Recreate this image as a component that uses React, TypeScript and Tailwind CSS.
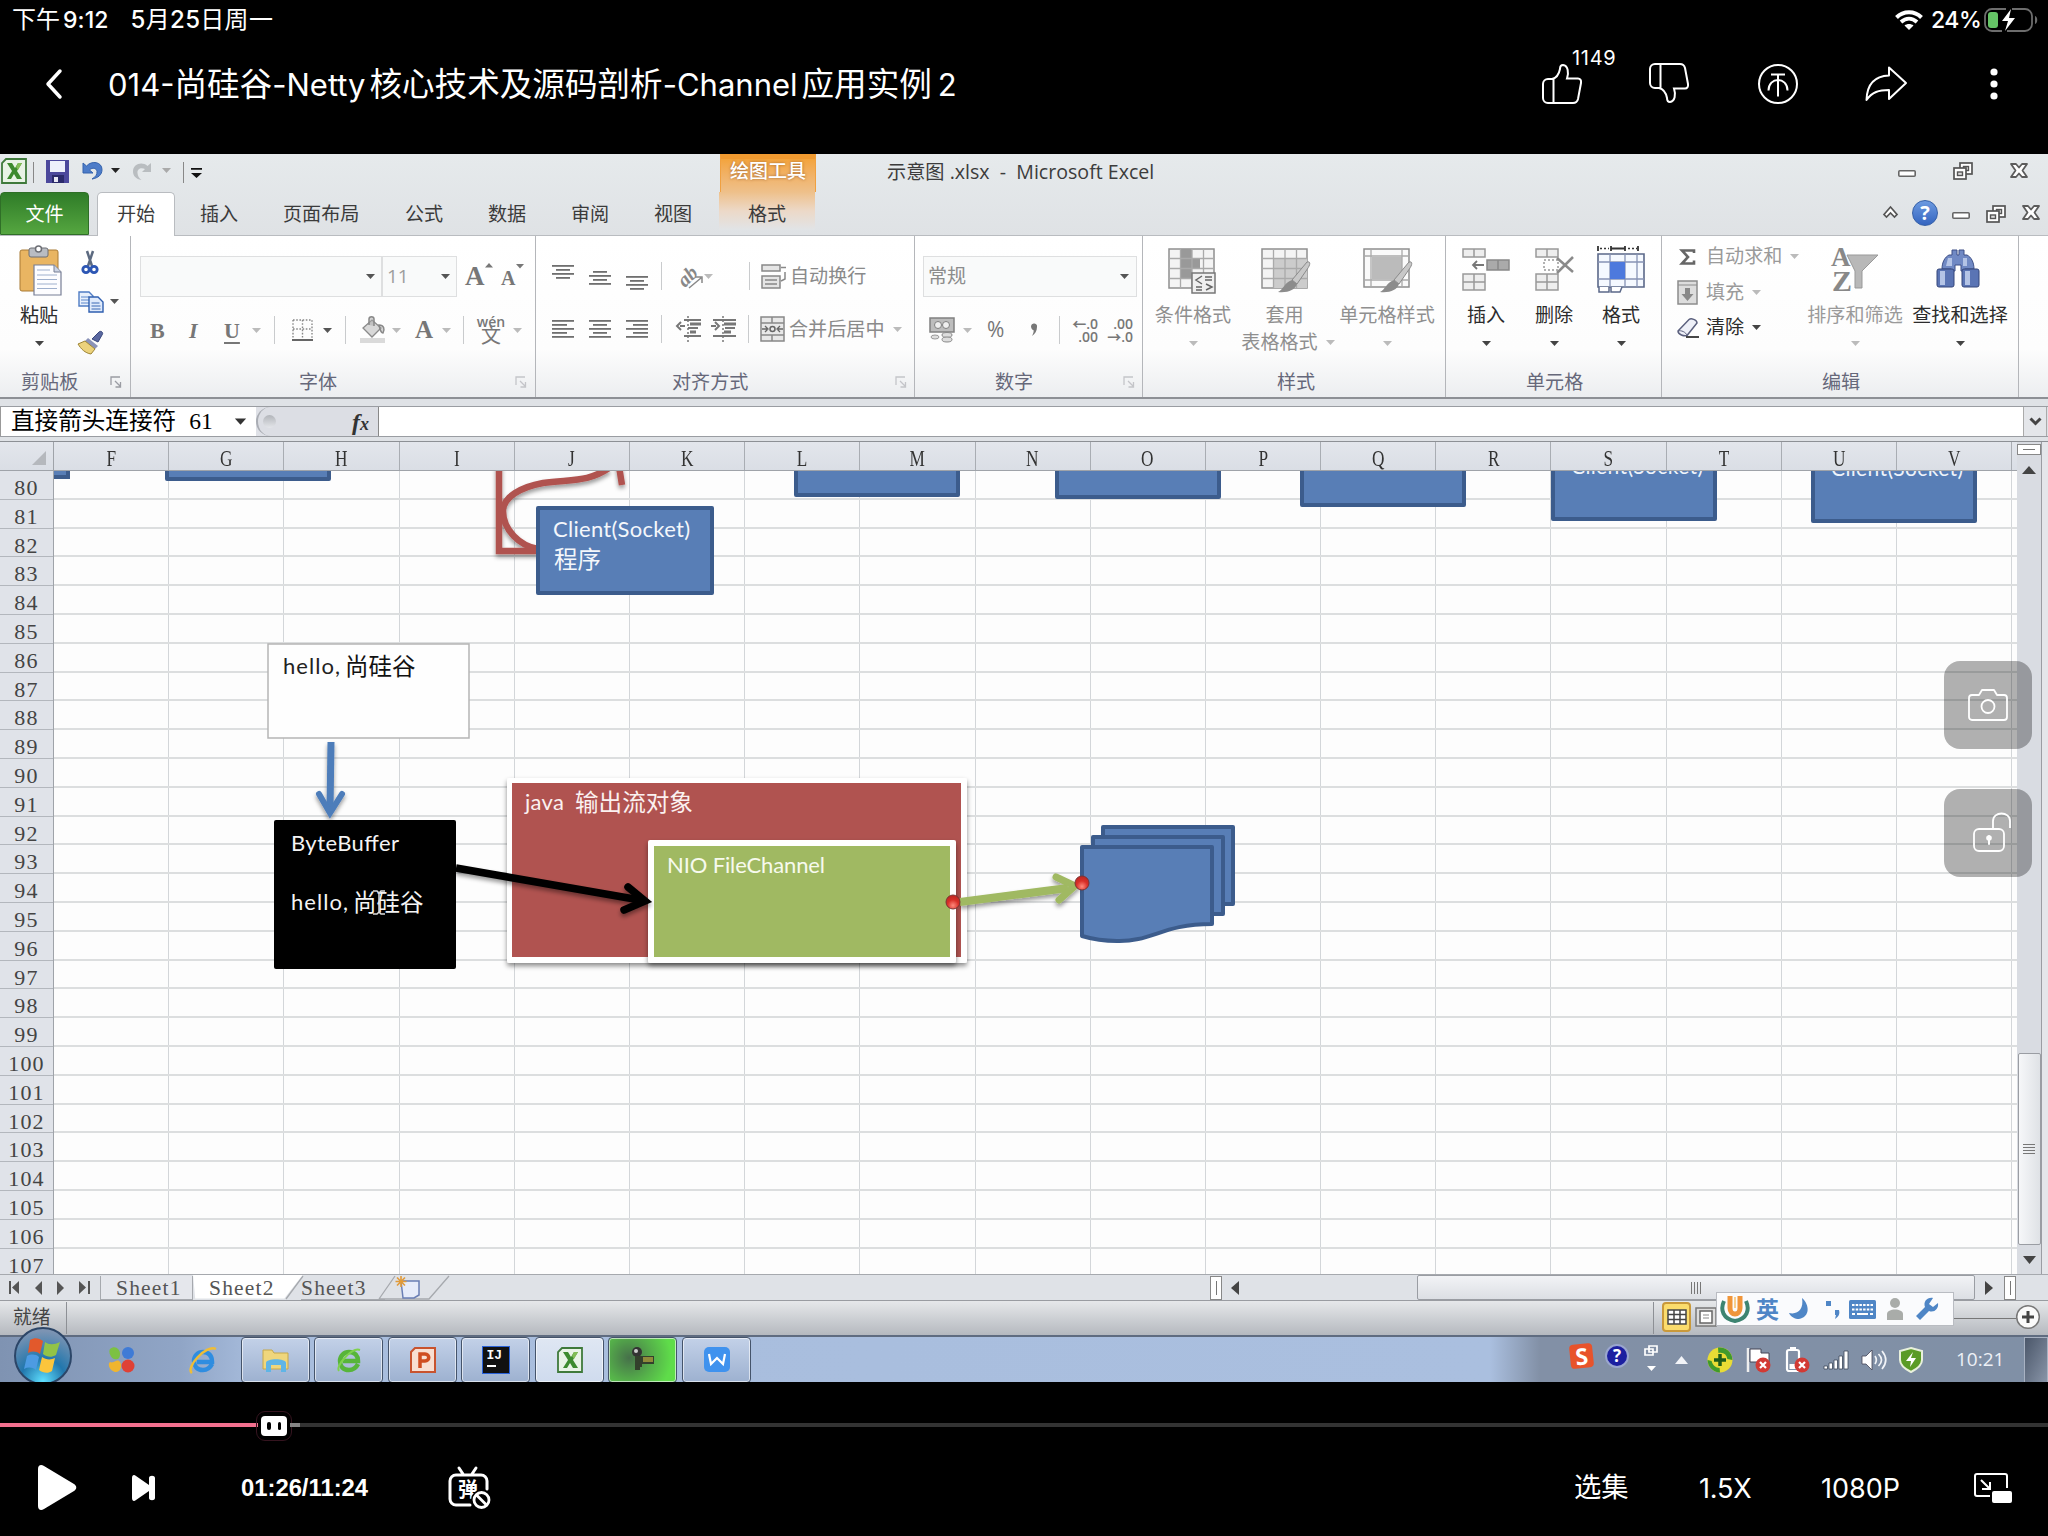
import React from 'react';

type Box = { w: number; h: number; className?: string; children?: React.ReactNode };

function Ic({ w, h, className = '', children }: Box) {
  return (
    <svg width={w} height={h} viewBox={`0 0 ${w} ${h}`} className={`shrink-0 overflow-visible ${className}`} fill="none">
      {children}
    </svg>
  );
}

function Arrow({ className = '', color = '#555' }: { className?: string; color?: string }) {
  return (
    <Ic w={9} h={5} className={className}>
      <path d="M0 0h9L4.500 5z" fill={color} />
    </Ic>
  );
}

function Sep({ className = '' }: { className?: string }) {
  return <div className={`h-7 w-px shrink-0 bg-[#c9cbcd] ${className}`} />;
}

function Launcher({ className = '', color = '#9a9ca3' }: { className?: string; color?: string }) {
  return (
    <Ic w={12} h={12} className={className}>
      <path d="M1 9V1h9M5 5l5 5M10.500 6v5H5.500" stroke={color} strokeWidth="1.300" />
    </Ic>
  );
}

function Group({ className, label, labelClass, launcher, children }: { className: string; label: string; labelClass: string; launcher?: React.ReactNode; children: React.ReactNode }) {
  return (
    <div className={`flex shrink-0 flex-col border-r border-[#b4b6ba] ${className}`}>
      <div className="h-[132px]">{children}</div>
      <div className="flex h-[28px] items-center">
        <span className={`shrink-0 whitespace-nowrap text-[#66687a] ${labelClass}`}>{label}</span>
        {launcher}
      </div>
    </div>
  );
}

function Lines({ rows, className = '' }: { rows: [number, number][]; className?: string }) {
  return (
    <Ic w={22} h={rows.length * 4 - 1} className={className}>
      {rows.map(([x, w], i) => (
        <rect key={i} x={x} y={i * 4} width={w} height={1.8} fill="#6f6f6f" />
      ))}
    </Ic>
  );
}

function MinIcon() {
  return <Ic w={18} h={7}><rect x=".8" y=".8" width="16.400" height="5.400" rx="1" fill="#fff" stroke="#666" strokeWidth="1.600" /></Ic>;
}
function RestoreIcon() {
  return (
    <Ic w={20} h={18}>
      <rect x="7" y="1" width="12" height="11" fill="#fff" stroke="#555" strokeWidth="1.700" />
      <rect x="10.500" y="4.500" width="5" height="4" fill="#ddd" stroke="#555" strokeWidth="1.400" />
      <rect x="1" y="6" width="12" height="11" fill="#fff" stroke="#555" strokeWidth="1.700" />
      <rect x="4.500" y="10" width="5" height="3.500" fill="#ddd" stroke="#555" strokeWidth="1.400" />
    </Ic>
  );
}
function CloseIcon() {
  return (
    <Ic w={18} h={15}>
      <path d="M1 1h5l3 3.500L12 1h5l-4.500 6.500 4.500 6.500h-5l-3-3.500L6 14H1l4.500-6.500z" fill="#fff" stroke="#5c5c5c" strokeWidth="1.800" strokeLinejoin="round" />
    </Ic>
  );
}

function ExcelIcon() {
  return (
    <Ic w={26} h={26}>
      <path d="M5 1h20v24H1V5z" fill="#e9f3e6" stroke="#3f7a3b" strokeWidth="1.800" />
      <path d="M6 5h5l3 5 3-5h4l-5 8 5 8h-5l-3-5-3 5H6l5-8z" fill="#3d8a2e" />
      <path d="M17 5h4l-4 7-2-3z" fill="#82bd55" />
    </Ic>
  );
}

function TitleBar() {
  return (
    <div className="flex h-[38px] items-start">
      <div className="ml-px mt-[4px]"><ExcelIcon /></div>
      <div className="ml-[6px] mt-[8px] h-[21px] w-px bg-[#888]" />
      <Ic w={23} h={23} className="ml-[12px] mt-[6px]">
        <path d="M0 0h23v23H0z" fill="#4c489c" />
        <path d="M4 1h15v11H4z" fill="#eef0fb" />
        <path d="M6 15h12v8H6z" fill="#2b2a6b" />
        <path d="M8 17h4v5H8z" fill="#e8e8f4" />
      </Ic>
      <Ic w={22} h={20} className="ml-[13px] mt-[7px]">
        <path d="M1 2v10h10L7.500 9c3-3 7-2 7.500 1.500.3 3-1.500 5.500-5 7.500 6-1 10-4 10-9.500C20 1 10-1 4.500 5z" fill="#4d7cc9" stroke="#3563ad" />
      </Ic>
      <Arrow className="ml-[7px] mt-[14px]" color="#222" />
      <Ic w={20} h={20} className="ml-[12px] mt-[8px]">
        <path d="M19 1v9h-9l3-3c-4-2-8 0-7.500 4 .2 3 1.500 5 4 7C4 17 1 14 1 9.500 1 2 10-1 15.500 4z" fill="#b9bdc0" />
      </Ic>
      <Arrow className="ml-[10px] mt-[14px]" color="#aaa" />
      <div className="ml-[12px] mt-[8px] h-[21px] w-px bg-[#888]" />
      <Ic w={11} h={11} className="ml-[7px] mt-[14px]"><path d="M0 0h11v1.800H0zM0 5h11l-5.500 5z" fill="#111" /></Ic>
      <div className="ml-[518px] h-[38px] w-[96px] border-x border-[#f0a040] bg-gradient-to-b from-[#f3a43c] to-[#eec08a] text-center text-[19px] font-medium leading-[25px] text-white [border-top:5px_solid_#f09a30] [text-shadow:0_0_3px_#a0622a]">
        绘图工具
      </div>
      <div className="ml-[71px] mt-[3px] w-[300px] whitespace-pre text-[19.2px] leading-[30px] text-[#3c3c3c]">示意图<span className="text-[19.600px]"> .xlsx{'  -  '}Microsoft Excel</span></div>
      <div className="ml-[711px] mt-[16px]"><MinIcon /></div>
      <div className="ml-[37px] mt-[8px]"><RestoreIcon /></div>
      <div className="ml-[37px] mt-[9px]"><CloseIcon /></div>
    </div>
  );
}

function TabRow() {
  const tab = 'shrink-0 whitespace-nowrap leading-[45px]';
  return (
    <div className="flex h-[44px] border-b border-[#b9bcc0] text-[19.100px] text-[#3b3b3b]">
      <div className="h-[43px] w-[89px] shrink-0 rounded-t-[4px] border border-[#2f6f27] bg-gradient-to-b from-[#2f7c28] to-[#55a640] text-center leading-[43px] text-white">文件</div>
      <div className="ml-[8px] h-[44px] w-[78px] shrink-0 rounded-t-[5px] border border-b-0 border-[#b9bcc0] bg-white text-center leading-[43px]">开始</div>
      <div className={`ml-[25px] w-[83px] ${tab}`}>插入</div>
      <div className={`w-[122px] ${tab}`}>页面布局</div>
      <div className={`w-[83px] ${tab}`}>公式</div>
      <div className={`w-[83px] ${tab}`}>数据</div>
      <div className={`w-[83px] ${tab}`}>审阅</div>
      <div className={`w-[65px] ${tab}`}>视图</div>
      <div className={`h-[38px] w-[96px] bg-gradient-to-b from-[#eec08a] via-[#ecd9c8] to-[#e1e4e7] text-center ${tab}`}>格式</div>
      <div className="ml-auto flex w-[168px] shrink-0 items-start">
        <Ic w={15} h={12} className="ml-[3px] mt-[14px]">
          <path d="M1 8.500L7.500 1 14 8.500 11.500 11 7.500 7 3.500 11z" fill="#fff" stroke="#555" strokeWidth="1.700" />
        </Ic>
        <div className="ml-[14px] mt-[8px] h-[26px] w-[26px] shrink-0 rounded-full border border-[#3560a8] bg-gradient-to-b from-[#6d9ae0] to-[#3565c0] text-center text-[20px] font-bold leading-[24px] text-white">?</div>
        <div className="ml-[14px] mt-[20px]"><MinIcon /></div>
        <div className="ml-[16px] mt-[13px]"><RestoreIcon /></div>
        <div className="ml-[16px] mt-[13px]"><CloseIcon /></div>
      </div>
    </div>
  );
}

function BigButton({ className, icon, label, labelClass = 'text-[#2c2c2c]', arrow = '#444', second }: { className: string; icon: React.ReactNode; label: string; labelClass?: string; arrow?: string; second?: string }) {
  return (
    <div className={`flex shrink-0 flex-col items-center whitespace-nowrap pt-[10px] ${className}`}>
      <div className="flex h-[56px] items-start justify-center">{icon}</div>
      <div className={`h-[27px] leading-[27px] ${labelClass}`}>{label}</div>
      {second ? (
        <div className={`-ml-[10px] flex h-[27px] items-center leading-[27px] ${labelClass}`}>{second}<Arrow className="-mr-[17px] ml-[8px]" color={arrow} /></div>
      ) : (
        <Arrow className="mt-[12px]" color={arrow} />
      )}
    </div>
  );
}

function Brush() {
  return (
    <>
      <path d="M46 14c4-1 3 3 1 6L36 36l-5-4z" fill="#c8c8c8" stroke="#8a8a8a" />
      <path d="M31 32l5 4c-2 6-9 9-19 8 5-2 6-9 14-12z" fill="#8c8c8c" />
    </>
  );
}

function StyleGrid({ fill }: { fill?: React.ReactNode }) {
  return (
    <>
      <path d="M1 1h45v39H1z" fill="#f4f4f4" stroke="#8f8f8f" strokeWidth="1.500" />
      {fill}
      <path d="M1 10.500h45M1 20.500h45M1 30.500h45M12.500 1v39M24 1v39M35.500 1v39" stroke="#aaa" strokeWidth="1.300" />
    </>
  );
}

function SmallCommand({ icon, label, muted = false }: { icon: React.ReactNode; label: string; muted?: boolean }) {
  return (
    <div className="flex h-[35.500px] items-center">
      <div className="flex w-[29px] shrink-0 items-center">{icon}</div>
      <span className={muted ? 'text-[#9a9a9a]' : 'text-[#2c2c2c]'}>{label}</span>
      <Arrow className="ml-[8px]" color={muted ? '#bbb' : '#444'} />
    </div>
  );
}

function Ribbon() {
  return (
    <div className="flex h-[163px] border-b-2 border-[#8d9095] bg-gradient-to-b from-white via-[#fdfdfd] via-70% to-[#eceef0] text-[19.100px]">
      <Group className="w-[131px]" label="剪贴板" labelClass="ml-[21px] w-[89px]" launcher={<Launcher />}>
        <div className="flex">
          <BigButton
            className="ml-[10px] w-[58px]"
            label="粘贴"
            icon={
              <Ic w={44} h={50} className="ml-[3px]">
                <rect x="1" y="4" width="38" height="41" rx="2" fill="#e9b562" stroke="#a97b35" />
                <rect x="10" y="2" width="19" height="9" rx="2" fill="#b9bcc2" stroke="#6d6f75" />
                <circle cx="19.500" cy="3" r="3" fill="#fff" stroke="#6d6f75" strokeWidth="1.500" />
                <path d="M15 19h20l7 7v23H15z" fill="#fdfdff" stroke="#777e95" strokeWidth="1.200" />
                <path d="M35 19v7h7" fill="#ccd4e4" stroke="#777e95" />
                <path d="M18 24h13M18 29h20M18 33.500h20M18 38h20M18 42.500h20" stroke="#9fb0cd" />
              </Ic>
            }
          />
          <div className="ml-[9px] flex flex-col pt-[15px]">
            <Ic w={26} h={24}>
              <path d="M10 0l5 15M16 0l-5 15" stroke="#5c6a80" strokeWidth="2.500" />
              <circle cx="9" cy="18.500" r="3.200" stroke="#2c56b4" strokeWidth="2.800" />
              <circle cx="17" cy="18.500" r="3.200" stroke="#2c56b4" strokeWidth="2.800" />
            </Ic>
            <div className="mt-[16px] flex items-center">
              <Ic w={26} h={21} className="ml-px">
                <path d="M1 1h10l4 4v10H1z" fill="#e8f0fc" stroke="#4f7cc4" strokeWidth="1.400" />
                <path d="M3 6h8M3 9h8M3 12h8" stroke="#5b86ca" />
                <path d="M11 6h9l5 5v10H11z" fill="#dfeafb" stroke="#2f5fb0" strokeWidth="1.400" />
                <path d="M13.500 12h8M13.500 15h9M13.500 18h9" stroke="#3b69b4" />
              </Ic>
              <Arrow className="ml-[6px]" />
            </div>
            <Ic w={27} h={23} className="mt-[19px]">
              <path d="M15 8l7-7c2-2 5 1 3 3l-4 7z" fill="#5a68a0" stroke="#39477c" />
              <path d="M11 7l10 8-3 3L8 10z" fill="#8b93b8" />
              <path d="M8 10l10 8-4 5C8 22 4 18 1 13z" fill="#ecd27c" stroke="#9d8434" />
            </Ic>
          </div>
        </div>
      </Group>

      <Group className="w-[405px]" label="字体" labelClass="ml-[168px] w-[216px]" launcher={<Launcher color="#c4c5c9" />}>
        <div className="flex h-[40px] translate-y-[20px] items-center">
          <div className="ml-[9px] flex h-[41px] w-[242px] items-center justify-end border border-[#dedfe0] bg-[#f9fafa] pr-[6px]"><Arrow /></div>
          <div className="flex h-[41px] w-[75px] items-center border border-[#dedfe0] bg-[#f9fafa] pl-[4px]"><span className="w-[54px] text-[19px] text-[#9d9d9d]">11</span><Arrow /></div>
          <span className="ml-[8px] w-[20px] font-['Liberation_Serif'] text-[27px] font-bold leading-[36px] text-[#777]">A</span>
          <Ic w={8} h={5} className="-mt-[22px]"><path d="M4 0l4 4.500H0z" fill="#777" /></Ic>
          <span className="ml-[8px] w-[15px] pt-[4px] font-['Liberation_Serif'] text-[20px] font-bold leading-[36px] text-[#777]">A</span>
          <Ic w={8} h={5} className="-mt-[20px]"><path d="M0 0h8L4 4.500z" fill="#777" /></Ic>
        </div>
        <div className="flex h-[40px] translate-y-[34px] items-center font-['Liberation_Serif'] text-[22px] text-[#777]">
          <b className="ml-[19px] w-[37px]">B</b>
          <b className="w-[37px] pl-[2px] italic">I</b>
          <b className="w-[28px] underline underline-offset-4">U</b>
          <Arrow color="#bbb" />
          <Sep className="ml-[13px]" />
          <Ic w={21} h={22} className="ml-[17px]">
            <path d="M1 1h19v18M1 1v18M10.500 1v18M1 10h19" stroke="#888" strokeWidth="1.400" strokeDasharray="1.600 1.600" />
            <path d="M0 21h21" stroke="#555" strokeWidth="1.800" />
          </Ic>
          <Arrow className="ml-[10px]" />
          <Sep className="ml-[13px]" />
          <Ic w={26} h={26} className="ml-[14px]">
            <path d="M0 21h25v5H0z" fill="#dadada" />
            <path d="M3 11l9-8 9 8-9 9z" fill="#d8d8d8" stroke="#8a8a8a" strokeWidth="1.300" />
            <path d="M9 8V2c0-3 5-3 5 0v7M19 8c5 0 6 4 4 8-2 0-3-3-4-8z" stroke="#888" strokeWidth="1.500" fill="#aaa" fillOpacity=".5" />
          </Ic>
          <Arrow className="ml-[6px]" color="#bbb" />
          <b className="ml-[14px] w-[17px] text-[25px]">A</b>
          <Arrow className="ml-[10px]" color="#bbb" />
          <Sep className="ml-[12px]" />
          <div className="ml-[13px] flex w-[28px] flex-col items-center font-['Open_Sans','Noto_Sans_CJK_SC',sans-serif] leading-none"><span className="text-[14px] font-semibold leading-[10px]">wén</span><span className="text-[20px] leading-[17px]">文</span></div>
          <Arrow className="ml-[8px]" color="#bbb" />
        </div>
      </Group>

      <Group className="w-[379px]" label="对齐方式" labelClass="ml-[136px] w-[223px]" launcher={<Launcher color="#c4c5c9" />}>
        <div className="flex h-[40px] translate-y-[20px] items-center">
          <Lines className="-mt-[8px] ml-[16px]" rows={[[0, 22], [4, 14], [0, 22], [4, 14]]} />
          <Lines className="ml-[15px] mt-[5px]" rows={[[4, 14], [0, 22], [4, 14], [0, 22]]} />
          <Lines className="ml-[15px] mt-[14px]" rows={[[0, 22], [4, 14], [0, 22], [4, 14]]} />
          <Sep className="ml-[13px]" />
          <div className="ml-[15px] flex w-[26px] items-center">
            <span className="-rotate-45 font-['Liberation_Serif'] text-[20px] font-bold italic leading-none text-[#888]">ab</span>
            <Ic w={14} h={14} className="-ml-[8px] mt-[10px]"><path d="M0 14L12 4M6 3l7 0v6" stroke="#888" strokeWidth="1.500" /></Ic>
          </div>
          <Arrow className="ml-px" color="#bbb" />
          <Sep className="ml-[36px]" />
          <Ic w={25} h={26} className="ml-[11px]">
            <path d="M1 2h18v6H1zM1 13h18v12H1z" fill="#e5e5e5" stroke="#888" strokeWidth="1.500" />
            <path d="M4 17h12M4 21h12M20 4.500h5M24 9v7l-4 2" stroke="#888" strokeWidth="1.500" />
          </Ic>
          <span className="ml-[4px] text-[#8a8a8a]">自动换行</span>
        </div>
        <div className="flex h-[40px] translate-y-[33px] items-center">
          <Lines className="ml-[16px]" rows={[[0, 22], [0, 15], [0, 22], [0, 15], [0, 22]]} />
          <Lines className="ml-[15px]" rows={[[0, 22], [4, 14], [0, 22], [4, 14], [0, 22]]} />
          <Lines className="ml-[15px]" rows={[[0, 22], [7, 15], [0, 22], [7, 15], [0, 22]]} />
          <Sep className="ml-[13px]" />
          <Ic w={25} h={26} className="ml-[14px]">
            <path d="M8 4h17M12 12h10M8 20h17" stroke="#777" strokeWidth="2" />
            <path d="M14 8h11M14 16h6" stroke="#777" strokeWidth="3" />
            <path d="M12 0v26" stroke="#777" strokeWidth="1.500" strokeDasharray="2 2" />
            <path d="M9 10H4M5 6l-4 4 4 4" stroke="#777" strokeWidth="2" />
          </Ic>
          <Ic w={25} h={26} className="ml-[10px]">
            <path d="M2 4h23M14 12h10M2 20h23" stroke="#777" strokeWidth="2" />
            <path d="M13 8h12M13 16h7" stroke="#777" strokeWidth="3" />
            <path d="M12 0v26" stroke="#777" strokeWidth="1.500" strokeDasharray="2 2" />
            <path d="M0 10h5M4 6l4 4-4 4" stroke="#777" strokeWidth="2" />
          </Ic>
          <Sep className="ml-[12px]" />
          <Ic w={25} h={26} className="ml-[11px]">
            <path d="M1 1h23v24H1zM1 7h23M1 19h23M12 1v6M12 19v6" fill="#e8e8e8" stroke="#888" strokeWidth="1.500" />
            <path d="M2 13h5M23 13h-5M5 10l3 3-3 3M20 10l-3 3 3 3" stroke="#666" strokeWidth="1.300" />
            <circle cx="12.500" cy="13" r="2.500" stroke="#666" strokeWidth="1.500" />
          </Ic>
          <span className="ml-[4px] text-[#8a8a8a]">合并后居中</span>
          <Arrow className="ml-[9px]" color="#bbb" />
        </div>
      </Group>

      <Group className="w-[228px]" label="数字" labelClass="ml-[80px] w-[128px]" launcher={<Launcher color="#c4c5c9" />}>
        <div className="flex h-[40px] translate-y-[20px] items-center">
          <div className="ml-[8px] flex h-[41px] w-[214px] items-center border border-[#dedfe0] bg-[#f9fafa] pl-[4px] text-[#8c8c8c]"><span className="w-[192px]">常规</span><Arrow /></div>
        </div>
        <div className="flex h-[40px] translate-y-[34px] items-center text-[#777]">
          <Ic w={26} h={26} className="ml-[14px]">
            <rect x="1" y="1" width="24" height="14" fill="#bdbdbd" stroke="#808080" strokeWidth="1.500" />
            <circle cx="9" cy="8" r="3.500" fill="#efefef" stroke="#808080" />
            <circle cx="17" cy="8" r="3.500" fill="#efefef" stroke="#808080" />
            <ellipse cx="18" cy="18" rx="5" ry="2.500" fill="#ddd" stroke="#888" />
            <ellipse cx="18" cy="22.500" rx="5" ry="2.500" fill="#ddd" stroke="#888" />
            <ellipse cx="6" cy="20" rx="4" ry="2" fill="#ddd" stroke="#999" />
          </Ic>
          <Arrow className="ml-[8px]" color="#bbb" />
          <span className="ml-[15px] w-[43px] text-[21px]">%</span>
          <Ic w={8} h={14}><path d="M1 3a3 3 0 116 1c0 4-2 7-5 9 1-2 2-4 1.500-6C2 7 1 5 1 3z" fill="#777" /></Ic>
          <Sep className="ml-[21px]" />
          <div className="ml-[12px] flex w-[26px] flex-col text-right text-[14px] font-semibold leading-[13px]"><span>←.0</span><span>.00</span></div>
          <div className="ml-[9px] flex w-[26px] flex-col text-right text-[14px] font-semibold leading-[13px]"><span>.00</span><span>→.0</span></div>
        </div>
      </Group>

      <Group className="w-[303px]" label="样式" labelClass="ml-[134px]">
        <div className="flex">
          <BigButton className="ml-[10px] w-[80px]" label="条件格式" labelClass="text-[#8f8f8f]" arrow="#bbb" icon={
            <Ic w={48} h={46} className="-ml-[2px] mt-[2px]">
              <StyleGrid fill={<path d="M12.500 1H24v9.500h8v10H24v10H12.500z" fill="#999" />} />
              <path d="M24 25h23v20H24z" fill="#f0f0f0" stroke="#777" strokeWidth="1.500" />
              <path d="M34 28l-6 4 6 4M28 39h6M28 42h6M37 29l7 0M37 32h7M38 36l6 3-6 3" stroke="#666" strokeWidth="1.500" />
            </Ic>
          } />
          <BigButton className="ml-[9px] w-[85px]" label="套用" second="表格格式" labelClass="text-[#8f8f8f]" arrow="#bbb" icon={
            <Ic w={48} h={46} className="mt-[2px]">
              <StyleGrid fill={<path d="M12.500 10.500H46V40H12.500z" fill="#ccc" />} />
              <Brush />
            </Ic>
          } />
          <BigButton className="ml-[7px] w-[106px]" label="单元格样式" labelClass="text-[#8f8f8f]" arrow="#bbb" icon={
            <Ic w={48} h={46} className="mt-[2px]">
              <path d="M1 1h45v38H1z" fill="#fafafa" stroke="#8f8f8f" strokeWidth="1.500" />
              <path d="M9 9h30v22H9z" fill="#bbb" />
              <path d="M1 8h45M1 32h45M8 1v38M39 1v38" stroke="#aaa" strokeWidth="1.300" />
              <Brush />
            </Ic>
          } />
        </div>
      </Group>

      <Group className="w-[216px]" label="单元格" labelClass="ml-[80px]">
        <div className="flex">
          <BigButton className="ml-[10px] w-[60px]" label="插入" icon={
            <Ic w={48} h={46} className="mt-[2px]">
              <path d="M1 1h22v8H1zM12 1v8M1 26h22v16H1zM1 34h22M12 26v16" fill="#eee" stroke="#999" strokeWidth="1.500" />
              <path d="M25 12h22v10H25zM36 12v10" fill="#aaa" stroke="#888" strokeWidth="1.500" />
              <path d="M22 17H11M15 13l-4 4 4 4" stroke="#777" strokeWidth="1.800" />
            </Ic>
          } />
          <BigButton className="ml-[6px] w-[64px]" label="删除" icon={
            <Ic w={38} h={46} className="mt-[2px]">
              <path d="M1 1h22v8H1zM12 1v8M1 26h22v16H1zM1 34h22M12 26v16" fill="#eee" stroke="#999" strokeWidth="1.500" />
              <path d="M9 12h14v10H9z" stroke="#999" strokeWidth="1.500" strokeDasharray="2 2" />
              <path d="M22 10l16 14M38 9L22 25" stroke="#8a8a8a" strokeWidth="2.500" />
            </Ic>
          } />
          <BigButton className="ml-[6px] w-[58px]" label="格式" icon={
            <Ic w={48} h={48}>
              <path d="M1 0v5M41 0v5M14 0v5M28 0v5M14 2.500h14" stroke="#333" strokeWidth="1.800" />
              <path d="M3 2.500h9M31 2.500h9" stroke="#333" strokeWidth="1.500" strokeDasharray="2 2" />
              <path d="M1 8h46v33H1z" fill="#f5f9ff" stroke="#5b6889" strokeWidth="1.600" />
              <path d="M1 16h46M1 33h46M13 8v33M28 8v33M40 8v33" stroke="#8693b5" strokeWidth="1.300" />
              <path d="M13 16h15v17H13z" fill="#4d79dd" />
              <path d="M2 41v5h10v-5M14 41v5h9l2-5" stroke="#5b6889" strokeWidth="1.500" fill="#fff" />
            </Ic>
          } />
        </div>
      </Group>

      <Group className="w-[357px]" label="编辑" labelClass="ml-[160px]">
        <div className="flex">
          <div className="ml-[15px] w-[128px] shrink-0 pt-[3px]">
            <SmallCommand muted label="自动求和" icon={<Ic w={15} h={16} className="ml-[3px]"><path d="M14 4V1.500H2L8 8l-6 6.500H14v-3" stroke="#666" strokeWidth="2.600" /></Ic>} />
            <SmallCommand muted label="填充" icon={
              <Ic w={21} h={25}>
                <rect x="1" y="1" width="19" height="23" fill="#ddd" stroke="#8c8c8c" strokeWidth="1.500" />
                <path d="M1 5h19" stroke="#8c8c8c" />
                <path d="M8 8h5v6h3.500l-6 7-6-7H8z" fill="#888" />
              </Ic>
            } />
            <SmallCommand label="清除" icon={
              <Ic w={22} h={20}>
                <path d="M1 13L12 1.500c2-1.500 8 0 8 3.500L10 17.500c-3 1-9-1-9-4.500z" fill="#eef0f8" stroke="#5b607e" strokeWidth="1.500" />
                <path d="M1 13c3-1 8 1 9 4.500" stroke="#5b607e" />
                <path d="M9 19h13" stroke="#333" strokeWidth="1.800" />
              </Ic>
            } />
          </div>
          <BigButton className="w-[100px]" label="排序和筛选" labelClass="text-[#9a9a9a]" arrow="#bbb" icon={
            <Ic w={48} h={48}>
              <text x="0" y="20" fontFamily="Liberation Serif" fontWeight="bold" fontSize="27" fill="#888">A</text>
              <text x="1" y="45" fontFamily="Liberation Serif" fontWeight="bold" fontSize="30" fill="#888">Z</text>
              <path d="M16 9h31L31 25v17h-7V25z" fill="#b8b8b8" stroke="#999" />
            </Ic>
          } />
          <BigButton className="ml-[3px] w-[104px]" label="查找和选择" icon={
            <Ic w={44} h={40} className="-ml-[4px] mt-[3px]">
              <path d="M16 1h5v5h2V1h5v5h3c4 2 7 7 7 14h-9v2h-4v-6h-6v6h-4v-2H6c0-7 3-12 7-14h3z" fill="#7089c4" stroke="#3d4f86" />
              <rect x="1" y="20" width="17" height="18" rx="2" fill="#5a74b4" stroke="#35467a" />
              <rect x="26" y="20" width="17" height="18" rx="2" fill="#5a74b4" stroke="#35467a" />
              <path d="M4 22h5v14H4zM29 22h5v14h-5zM12 9h4v8h-6zM27 9h4v8h-4z" fill="#b4c4e6" />
            </Ic>
          } />
        </div>
      </Group>
    </div>
  );
}

function FormulaBar() {
  return (
    <div className="h-[43px] border-b border-[#8d9095] bg-[#dfe2e6] pt-[7px]">
      <div className="flex h-[31px] items-center border-y border-[#9a9da2] bg-[#dfe1e7]">
        <div className="flex h-full w-[256px] items-center border-l border-[#999] bg-white pl-[10px]">
          <span className="w-[225px] whitespace-nowrap text-[23.600px] leading-none text-black">直接箭头连接符<span className="ml-[13px] font-['Liberation_Serif']">61</span></span>
          <Arrow color="#333" className="scale-125" />
        </div>
        <div className="flex h-[29px] w-[122px] items-center rounded-l-full border-l-2 border-[#aaadb4] bg-[#dcdee4] pl-[5px]">
          <span className="h-[13px] w-[13px] rounded-full bg-gradient-to-b from-[#b2b5ba] to-[#e4e6ea]" />
          <span className="ml-[76px] font-['Liberation_Serif'] text-[24px] font-bold italic leading-none text-[#333]">f<span className="text-[18px]">x</span></span>
        </div>
        <div className="h-full w-[1645px] border-l border-[#888] bg-white" />
        <div className="flex h-full w-[24px] items-center justify-center border-x border-[#aaa] bg-[#e4e6ea]">
          <Ic w={13} h={9}><path d="M1.500 1.500L6.500 6.500l5-5" stroke="#444" strokeWidth="3" /></Ic>
        </div>
      </div>
    </div>
  );
}

const columns = 'FGHIJKLMNOPQRSTUV'.split('');
const rowNumbers = Array.from({ length: 28 }, (_, i) => 80 + i);

function ClientBox({ x, bottom, text }: { x: number; bottom: number; text?: number }) {
  return (
    <g>
      <rect x={x + 2} y={440} width={162} height={bottom - 442} fill="#587eb6" stroke="#3c5c8c" strokeWidth="4" strokeLinejoin="round" />
      {text ? <text x={x + 20} y={text} fontFamily="Lato" fontSize="21" fill="#eef3fa" textLength="132">Client(Socket)</text> : null}
    </g>
  );
}

function Diagram() {
  const cjk = 'Noto Sans CJK SC, sans-serif';
  return (
    <svg className="absolute inset-0" width="1963" height="803" viewBox="54 471 1963 803" fill="none">
      <defs>
        <filter id="lift" x="-10%" y="-10%" width="120%" height="125%">
          <feDropShadow dx="0" dy="3" stdDeviation="2.500" floodOpacity=".45" />
        </filter>
        <filter id="lineLift" filterUnits="userSpaceOnUse" x="54" y="440" width="1963" height="834">
          <feDropShadow dx="0" dy="3" stdDeviation="2" floodOpacity=".4" />
        </filter>
        <radialGradient id="handle" cx=".5" cy=".75" r=".8"><stop offset="0" stopColor="#ff8a7c" /><stop offset=".5" stopColor="#d92f28" /><stop offset="1" stopColor="#b52520" /></radialGradient>
      </defs>
      <path d="M54 468h14v9H54" fill="#587eb6" stroke="#3c5c8c" strokeWidth="4" />
      <ClientBox x={165} bottom={481} />
      <ClientBox x={794} bottom={497} />
      <ClientBox x={1055} bottom={499} />
      <ClientBox x={1300} bottom={507} />
      <ClientBox x={1551} bottom={521} text={474} />
      <ClientBox x={1811} bottom={523} text={476} />

      <g stroke="#b05350" strokeWidth="6.500" filter="url(#lineLift)">
        <path d="M499 465v86h40" />
        <path d="M538 549C520 546 503 530 503 511c0-14 18-24 40-28 30-4 45-1 66-15" />
        <path d="M618 460l4 25" />
      </g>

      <rect x="538" y="508" width="174" height="85" fill="#587eb6" stroke="#3c5c8c" strokeWidth="4" strokeLinejoin="round" />
      <text x="553" y="537" fontFamily="Lato" fontSize="22" fill="#f4f7fb" textLength="137">Client(Socket)</text>
      <text x="554" y="568" fontFamily={cjk} fontSize="23.500" fill="#f4f7fb">程序</text>

      <rect x="268" y="644" width="201" height="94" fill="#fefefe" stroke="#b5b5b5" strokeWidth="1.500" />
      <text x="283" y="674" fontFamily="Lato" fontSize="22" fill="#222" textLength="57">hello,</text>
      <text x="345" y="675" fontFamily={cjk} fontSize="23.500" fill="#111">尚硅谷</text>

      <g stroke="#4d7dba" filter="url(#lineLift)">
        <path d="M331 742l-1 68" strokeWidth="7" />
        <path d="M319 794l11 19 12-19" strokeWidth="6" strokeLinecap="round" />
      </g>

      <rect x="274" y="820" width="182" height="149" rx="2" fill="#000" />
      <text x="291" y="851" fontFamily="Lato" fontSize="22" fill="#f4f4f4" textLength="108">ByteBuffer</text>
      <text x="291" y="910" fontFamily="Lato" fontSize="22" fill="#f4f4f4" textLength="57">hello,</text>
      <text x="353" y="911" fontFamily={cjk} fontSize="23.500" fill="#f4f4f4">尚硅谷</text>
      <path d="M373 891h4l2 2 2-2h4M373 914h4l2-2 2 2h4M379 893v19" stroke="#ddd" strokeWidth="1.500" />

      <rect x="507" y="778" width="460" height="185" rx="2" fill="#fff" filter="url(#lift)" />
      <rect x="512" y="783" width="449" height="174" fill="#b05350" />
      <text x="525" y="810" fontFamily="Lato" fontSize="22" fill="#fbf1f0" textLength="39">java</text>
      <text x="575" y="811" fontFamily={cjk} fontSize="23.600" fill="#fbf1f0">输出流对象</text>
      <rect x="648" y="840" width="308" height="123" rx="2" fill="#fff" filter="url(#lift)" />
      <rect x="654" y="846" width="296" height="111" fill="#a0b962" />
      <text x="667" y="873" fontFamily="Lato" fontSize="22" fill="#f7faee" textLength="158">NIO FileChannel</text>

      <g stroke="#000" filter="url(#lineLift)">
        <path d="M456 868l184 32" strokeWidth="7.500" />
        <path d="M628 887l17 14-21 9" strokeWidth="7.500" strokeLinecap="round" />
      </g>

      <g fill="#587eb6" stroke="#3c5c8c" strokeWidth="4" strokeLinejoin="round">
        <path d="M1103 827h130v77h-130z" />
        <path d="M1093 837h130v77h-130z" />
        <path d="M1082 847h130v77c-50 0-60 18-95 17-15 0-25-2-35-5z" />
      </g>

      <g stroke="#a0b962" filter="url(#lineLift)">
        <path d="M960 902l108-14" strokeWidth="8" />
        <path d="M1056 877l19 9-16 14" strokeWidth="7" strokeLinecap="round" />
      </g>
      <circle cx="953" cy="902" r="7" fill="url(#handle)" stroke="#7b3535" />
      <circle cx="1082" cy="883" r="7" fill="url(#handle)" stroke="#7b3535" />
    </svg>
  );
}

function Sheet() {
  return (
    <div className="flex h-[832px]">
      <div className="w-[2017px] overflow-hidden">
        <div className="flex h-[29px] border-b border-[#9fa3a9] bg-gradient-to-b from-[#e3e6ec] to-[#dadee5]">
          <div className="flex w-[54px] shrink-0 items-end justify-end border-r border-[#9fa3a9] pb-[5px] pr-[7px]">
            <Ic w={14} h={14}><path d="M14 0v14H0z" fill="#b5b8bd" /></Ic>
          </div>
          {columns.map((c) => (
            <div key={c} className="w-[115.200px] shrink-0 border-r border-[#a9adb3] text-center font-['Liberation_Serif'] text-[23px] leading-[34px] text-[#333]">
              <span className="inline-block scale-x-75">{c}</span>
            </div>
          ))}
        </div>
        <div className="flex h-[803px]">
          <div className="h-[803px] w-[54px] shrink-0 overflow-hidden border-r border-[#9fa3a9] bg-[#e0e3e9]">
            {rowNumbers.map((n) => (
              <div key={n} className="h-[28.800px] border-b border-[#b3b7bd] text-center font-['Liberation_Serif'] text-[22px] leading-[33px] tracking-[1.200px] text-[#444]">{n}</div>
            ))}
          </div>
          <div className="relative h-[803px] flex-1 overflow-hidden bg-[#fdfdfd]">
            <div className="absolute inset-0 flex">
              {columns.map((c) => <div key={c} className="w-[115.200px] shrink-0 border-r border-[#d3d6d9]" />)}
            </div>
            <div className="absolute inset-0">
              {rowNumbers.map((n) => <div key={n} className="h-[28.800px] border-b-2 border-[#dcdedf]" />)}
            </div>
            <Diagram />
          </div>
        </div>
      </div>
      <div className="flex w-[25px] flex-col items-center border-r border-[#9a9da3] bg-[#d9dce2]">
        <div className="mt-[2px] flex h-[11px] w-[24px] items-center justify-center border border-[#888] bg-white"><span className="h-px w-[12px] bg-[#777]" /></div>
        <Ic w={14} h={8} className="mt-[11px]"><path d="M7 0l7 8H0z" fill="#444" /></Ic>
        <div className="mt-[579px] flex h-[192px] w-[23px] flex-col items-center justify-center gap-[2px] rounded-[2px] border border-[#9a9da3] bg-gradient-to-r from-[#f6f7f9] to-[#dfe2e6]">
          <i className="h-px w-[12px] bg-[#777]" /><i className="h-px w-[12px] bg-[#777]" /><i className="h-px w-[12px] bg-[#777]" /><i className="h-px w-[12px] bg-[#777]" />
        </div>
        <Ic w={13} h={8} className="mt-[11px]"><path d="M0 0h13L6.500 8z" fill="#444" /></Ic>
      </div>
      <div className="flex-1 bg-[#e4e6ea]" />
    </div>
  );
}

function SheetTabs() {
  return (
    <div className="flex h-[26px] items-center border-t border-[#a6a9ae] bg-[#dfe2e7] font-['Liberation_Serif'] text-[21.500px] leading-[24px] text-[#555]">
      <Ic w={11} h={15} className="ml-[9px]"><path d="M0 1h2v13H0zM10 1v13L3 7.500z" fill="#555" /></Ic>
      <Ic w={7} h={14} className="ml-[15px]"><path d="M7 0v14L0 7z" fill="#555" /></Ic>
      <Ic w={7} h={14} className="ml-[15px]"><path d="M0 0v14l7-7z" fill="#555" /></Ic>
      <Ic w={11} h={15} className="ml-[15px]"><path d="M9 1h2v13H9zM0 1v13l7-6.500z" fill="#555" /></Ic>
      <div className="ml-[10px] h-[24px] w-[93px] border border-t-0 border-[#a6a9ae] bg-[#e5e7ec] pl-[15px] tracking-[1.200px]">Sheet1</div>
      <div className="-mt-[2px] h-[24px] w-[110px] bg-white pl-[16px] pt-px tracking-[1.200px] [clip-path:polygon(0_0,100%_0,83%_100%,2%_100%)]">Sheet2</div>
      <Ic w={17} h={25} className="-ml-[17px]"><path d="M17 1L0 24" stroke="#a6a9ae" strokeWidth="1.300" /></Ic>
      <div className="h-[24px] w-[84px] border-b border-[#a6a9ae] tracking-[1.200px] -ml-[2px]">Sheet3</div>
      <Ic w={72} h={25} className="-ml-[4px]">
        <path d="M14 1L-2 24M68 1L48 24H-2" stroke="#a6a9ae" strokeWidth="1.300" />
        <path d="M20 6h18v14l-5 3H22z" fill="#e6ecfa" stroke="#6a7fb5" strokeWidth="1.500" />
        <path d="M20 1v11M14.500 6.500h11M16 2.500l8 8M24 2.500l-8 8" stroke="#e09a3a" strokeWidth="1.600" />
      </Ic>
      <div className="ml-[757px] flex h-[24px] w-[12px] shrink-0 items-center justify-center border border-[#888] bg-white"><i className="h-[14px] w-px bg-[#777]" /></div>
      <Ic w={8} h={14} className="ml-[9px]"><path d="M8 0v14L0 7z" fill="#444" /></Ic>
      <div className="ml-auto flex h-[25px] w-[558px] shrink-0 items-center justify-center gap-[2px] rounded-[2px] border border-[#9a9da3] bg-gradient-to-b from-[#f2f3f6] to-[#dcdfe4]">
        <i className="h-[12px] w-px bg-[#777]" /><i className="h-[12px] w-px bg-[#777]" /><i className="h-[12px] w-px bg-[#777]" /><i className="h-[12px] w-px bg-[#777]" />
      </div>
      <Ic w={8} h={14} className="ml-[10px]"><path d="M0 0v14l8-7z" fill="#444" /></Ic>
      <div className="ml-[11px] mr-[32px] flex h-[24px] w-[12px] shrink-0 items-center justify-center border border-[#888] bg-white"><i className="h-[14px] w-px bg-[#777]" /></div>
    </div>
  );
}

function StatusBar() {
  return (
    <div className="relative flex h-[35px] items-center border-t border-[#999ca1] bg-gradient-to-b from-[#e6e8ea] to-[#b5b9bf]">
      <span className="-mt-[2px] ml-[13px] w-[53px] text-[18.800px] leading-none text-[#444]">就绪</span>
      <i className="h-[32px] w-px bg-[#8d9095]" />
      <i className="ml-[1586px] h-[32px] w-px bg-[#8d9095]" />
      <div className="-mt-[2px] ml-[8px] flex h-[30px] w-[29px] items-center justify-center rounded-[4px] border-2 border-[#c9993a] bg-[#fbdc6c]">
        <Ic w={20} h={16}><path d="M1 1h18v14H1zM1 5.500h18M1 10.500h18M7 1v14M13 1v14" fill="#fff" stroke="#444" strokeWidth="1.500" /></Ic>
      </div>
      <Ic w={21} h={20} className="-mt-[2px] ml-[4px]">
        <rect x="1" y="1" width="20" height="18" fill="#ddd" stroke="#777" strokeWidth="1.500" />
        <rect x="5" y="4" width="12" height="12" fill="#fff" stroke="#666" strokeWidth="1.500" />
        <path d="M8 8h6M8 11h6" stroke="#888" />
      </Ic>
      <i className="ml-[237px] h-px w-[63px] bg-[#777]" />
      <Ic w={24} h={24} className="-mt-[2px]">
        <circle cx="12" cy="12" r="11.300" fill="#fafafa" stroke="#777" strokeWidth="1.500" />
        <path d="M12 6v12M6 12h12" stroke="#444" strokeWidth="3" />
      </Ic>
      <div className="absolute left-[1716px] top-[-9px] flex h-[34px] w-[238px] items-center border border-[#b9bcc2] bg-[#fafbfd]">
        <Ic w={28} h={30} className="ml-[4px]">
          <path d="M3 7c-4 9-1 18 11 20 12-2 15-11 11-20" stroke="#3d8471" strokeWidth="4" />
          <path d="M9 2v12c0 8 10 8 10 0V2" stroke="#f0953a" strokeWidth="5" />
          <path d="M14 3v11" stroke="#f7c069" strokeWidth="1.500" />
        </Ic>
        <span className="ml-[7px] w-[24px] text-[23px] font-bold leading-none text-[#4f86c6]">英</span>
        <Ic w={21} h={22} className="ml-[9px]"><path d="M13 0c8 7 8 19-3 21-4 0-8-2-10-6 9 2 15-4 13-15z" fill="#4f86c6" /></Ic>
        <Ic w={14} h={20} className="ml-[16px]"><path d="M0 2h5v5H0zM9 11h4c1 4 0 6-4 9l1-4H9z" fill="#4f86c6" /></Ic>
        <Ic w={27} h={19} className="ml-[9px]">
          <rect width="27" height="19" rx="1.500" fill="#4f86c6" />
          <path d="M3 5h21M3 9.500h21" stroke="#fff" strokeWidth="2" strokeDasharray="2.500 1.200" />
          <path d="M3 14h3M8 14h11M21 14h3" stroke="#fff" strokeWidth="2" />
        </Ic>
        <Ic w={16} h={22} className="ml-[11px]"><circle cx="8" cy="5" r="5" fill="#a9aca9" /><path d="M0 22v-6c0-6 16-6 16 0v6z" fill="#a9aca9" /></Ic>
        <Ic w={22} h={22} className="ml-[13px]"><path d="M17 0c-6-1-10 4-8 9l-9 9 4 4 9-9c5 2 10-2 9-8l-5 4-4-3z" fill="#4f86c6" /></Ic>
      </div>
    </div>
  );
}

function TaskButton({ className = '', children }: { className?: string; children: React.ReactNode }) {
  return (
    <div className={`flex h-[46px] w-[69px] shrink-0 items-center justify-center rounded-[4px] border border-[#45546b] shadow-[inset_0_0_0_1px_rgba(255,255,255,0.6)] ${className}`}>
      {children}
    </div>
  );
}

function ErrorBadge({ x }: { x: number }) {
  return (
    <>
      <circle cx={x} cy="18" r="7.500" fill="#d23a34" />
      <path d={`M${x - 3} 15l6 6M${x + 3} 15l-6 6`} stroke="#fff" strokeWidth="2.200" />
    </>
  );
}

function Taskbar() {
  const plain = 'bg-gradient-to-b from-[#c3d1e8] to-[#9db1d0]';
  return (
    <div className="flex h-[47px] items-center border-t-2 border-[#5f6c80] bg-[linear-gradient(to_right,#7f93b2_0,#90a5c6_180px,#a8bddd_260px,#aabfdf_1490px,#8290a6_1540px,#8090a6_2048px)]">
      <Ic w={58} h={58} className="relative z-10 -mt-[8px] ml-[14px]">
        <defs>
          <radialGradient id="orb" cx=".5" cy=".95" r=".9"><stop offset="0" stopColor="#5fe0ff" /><stop offset=".45" stopColor="#2277ad" /><stop offset="1" stopColor="#7d94b3" /></radialGradient>
        </defs>
        <circle cx="29" cy="29" r="28" fill="url(#orb)" stroke="#2c4668" strokeWidth="2" />
        <path d="M16 13c5-3 9-2 13 1l-3 13c-4-3-8-3-12-1z" fill="#e2592c" />
        <path d="M31 15c4 3 9 3 15 0l-4 13c-5 3-9 2-13-1z" fill="#92c347" />
        <path d="M13 29c4-2 9-2 12 1l-3 13c-4-3-8-3-12-1z" fill="#4d9be2" />
        <path d="M28 30c4 3 9 3 13 1l-3 13c-4 3-9 2-13-1z" fill="#fbc53c" />
      </Ic>
      <Ic w={27} h={27} className="ml-[36px]">
        <path d="M2 3c5-4 10 0 10 5S9 14 6 13 0 6 2 3z" fill="#7cc142" /><circle cx="20" cy="7" r="6" fill="#3f7bd6" />
        <path d="M2 16c4 2 7-4 10 0s0 11-5 10-8-8-5-10z" fill="#f0b52f" /><circle cx="20" cy="20" r="6.500" fill="#df4136" />
      </Ic>
      <Ic w={29} h={28} className="ml-[53px]">
        <path d="M24 18c-2 4-5 6-9 6-6 0-9-4-9-9s4-9 9-9c6 0 9 4 9 10H9" stroke="#2f8de0" strokeWidth="4.500" />
        <path d="M4 27C-3 22 18-2 28 3" stroke="#eebd37" strokeWidth="2.500" />
      </Ic>
      <TaskButton className={`ml-[24px] ${plain}`}>
        <Ic w={28} h={26}>
          <path d="M1 3h9l2 3h14v16H1z" fill="#efd67c" stroke="#c6a84b" />
          <path d="M4 25v-9c0-5 20-5 20 0v9h-5v-7H9v7z" fill="#5fb5e6" />
        </Ic>
      </TaskButton>
      <TaskButton className={`ml-[4px] ${plain}`}>
        <Ic w={26} h={26}><path d="M22 17c-2 4-5 6-9 6-6 0-9-4-9-9s4-9 9-9c6 0 9 4 9 9H7" stroke="#57b53a" strokeWidth="4.500" /><path d="M3 24C-1 19 16 0 24 3" stroke="#7fd24c" strokeWidth="2" /></Ic>
      </TaskButton>
      <TaskButton className={`ml-[5px] ${plain}`}>
        <Ic w={26} h={26}><path d="M5 1h20v24H1V5z" fill="#f8dfd2" stroke="#c8532e" strokeWidth="2" /><path d="M10 21V7h5c5 0 5 7 0 7h-5" stroke="#cf4d20" strokeWidth="3.500" /></Ic>
      </TaskButton>
      <TaskButton className={`ml-[4px] ${plain}`}>
        <div className="flex h-[26px] w-[26px] flex-col items-start bg-[#111] pl-[4px] pt-[2px] font-['Liberation_Mono'] text-[13px] font-bold leading-[13px] text-white ring-1 ring-[#2a62d8]">IJ<i className="mt-[3px] h-[2px] w-[9px] bg-white" /></div>
      </TaskButton>
      <TaskButton className="ml-[5px] bg-gradient-to-b from-[#dfe7f3] to-[#cfdbee]"><ExcelIcon /></TaskButton>
      <TaskButton className="ml-[4px] bg-[radial-gradient(circle_at_30%_45%,#46704a_0,#55b04a_45%,#5fdc4a_80%)]">
        <Ic w={26} h={26}><circle cx="7" cy="5" r="5" fill="#333" /><circle cx="6" cy="4" r="2" fill="#ccc" /><path d="M5 9h5v14H5zM10 9h14v8H12v3h-2z" fill="#33402c" /><path d="M13 10h10v5H13z" fill="#8f8a3a" /></Ic>
      </TaskButton>
      <TaskButton className={`ml-[5px] ${plain}`}>
        <div className="flex h-[25px] w-[26px] items-center justify-center rounded-[5px] bg-[#3f92ee]"><Ic w={18} h={13}><path d="M1 1l2 10 6-6 6 6 2-10" stroke="#fff" strokeWidth="2.200" /></Ic></div>
      </TaskButton>

      <div className="ml-auto flex h-full items-center">
        <div className="-mt-[7px] flex h-[24px] w-[23px] -rotate-6 items-center justify-center rounded-[4px] bg-[#e8532b] text-[23px] font-bold leading-none text-white">S</div>
        <div className="-mt-[7px] ml-[12px] h-[24px] w-[24px] rounded-full border-2 border-[#9aa6cf] bg-[#1c1fa0] text-center text-[17px] font-bold leading-[20px] text-white">?</div>
        <div className="-mt-[3px] ml-[15px] flex flex-col items-center gap-[10px]">
          <Ic w={14} h={11}><path d="M5 1h8v6H5zM1 4h8v6H1z" fill="#8290a6" stroke="#fff" strokeWidth="1.700" /></Ic>
          <Ic w={9} h={5}><path d="M0 0h9L4.500 5z" fill="#fff" /></Ic>
        </div>
        <Ic w={13} h={8} className="ml-[17px]"><path d="M6.500 0L13 8H0z" fill="#f2f4f8" /></Ic>
        <Ic w={26} h={26} className="ml-[19px]"><circle cx="13" cy="13" r="12.500" fill="#e8dc35" /><path d="M11 .6A12.500 12.500 0 0125.400 13l-5-1c-1-5-4-7-9-6zM13 25.500A12.500 12.500 0 01.6 13l4 1c1 4 4 7 8 7z" fill="#3f9a2c" /><path d="M13 7v12M7 13h12" stroke="#1e5c1a" strokeWidth="3.500" /></Ic>
        <Ic w={25} h={26} className="ml-[13px]"><path d="M2 1v24" stroke="#eee" strokeWidth="2.500" /><path d="M4 2h11v4h8v9H4z" fill="#fff" stroke="#445" /><ErrorBadge x={17} /></Ic>
        <Ic w={25} h={26} className="ml-[14px]"><rect x="2" y="3" width="12" height="21" rx="2" stroke="#fff" strokeWidth="2.200" /><path d="M5 0h6v2H5zM4.500 17h7v5h-7z" fill="#fff" /><ErrorBadge x={17} /></Ic>
        <Ic w={26} h={20} className="ml-[13px]"><path d="M1 16h3.500v3H1zM6 13h3.500v6H6zM11 10h3.500v9H11zM16 6h3.500v13H16zM21 1h4v18h-4z" fill="#fff" stroke="#3e4858" strokeWidth=".8" /></Ic>
        <Ic w={25} h={22} className="ml-[12px]"><path d="M1 7h4l6-6v20l-6-6H1z" fill="#fff" stroke="#445" strokeWidth=".8" /><path d="M14 7c2 3 2 5 0 8M17.500 5c4 4 4 8 0 12M21 2c5 6 5 12 0 18" stroke="#f2f4f8" strokeWidth="1.700" /></Ic>
        <Ic w={24} h={25} className="ml-[13px]"><path d="M12 1l11 3v9c0 5-5 9-11 12C6 22 1 18 1 13V4z" fill="#5a9b26" stroke="#e8f0dc" strokeWidth="2" /><path d="M14 5L7 14h5l-1 6 6-9h-5z" fill="#fff" /></Ic>
        <span className="ml-[33px] w-[52px] text-[19px] leading-none text-[#eef1f6]">10:21</span>
        <div className="ml-[16px] h-[46px] w-[24px] border border-[#a8b2c2] bg-gradient-to-br from-[#4b576a] to-[#8995a8]" />
      </div>
    </div>
  );
}

function PlayerHeader() {
  return (
    <div className="flex h-[154px] flex-col font-['Inter','Noto_Sans_CJK_SC',sans-serif] text-white">
      <div className="flex h-[40px] items-center text-[22px] leading-none">
        <span className="ml-[12px] whitespace-nowrap text-[24px]">下午<span className="ml-[3px] text-[23px] font-medium tracking-[0.100px]">9:12</span></span>
        <span className="ml-[22px] whitespace-nowrap text-[24px] tracking-[0.300px]"><span className="font-medium">5</span>月<span className="font-medium">25</span>日周一</span>
        <div className="ml-auto flex items-center">
          <Ic w={28} h={20}>
            <path d="M1.500 7.500c7-7 18-7 25 0" stroke="#fff" strokeWidth="4" />
            <path d="M6 12c5-4.500 11-4.500 16 0" stroke="#fff" strokeWidth="3.800" />
            <path d="M14 20l-4.500-4.500c2.500-2 6.500-2 9 0z" fill="#fff" />
          </Ic>
          <span className="ml-[8px] w-[52px] whitespace-nowrap text-[23px] font-medium tracking-[-0.500px]">24%</span>
          <Ic w={54} h={24} className="ml-px mr-[10px]">
            <path d="M22 1H8a7 7 0 00-7 7v8a7 7 0 007 7h10M28 1h13a7 7 0 017 7v8a7 7 0 01-7 7H23" stroke="#6d6d6d" strokeWidth="1.800" />
            <path d="M51 8c3 1 3 7 0 8z" fill="#6d6d6d" />
            <rect x="4" y="4" width="10" height="16" rx="3" fill="#65c466" />
            <path d="M27 1L18 13h6l-3 10 10-13h-6z" fill="#fff" />
          </Ic>
        </div>
      </div>
      <div className="flex h-[88px] items-center">
        <Ic w={17} h={30} className="ml-[45px]"><path d="M15 2L3 15l12 13" stroke="#fff" strokeWidth="3.500" strokeLinecap="round" strokeLinejoin="round" /></Ic>
        <h1 className="ml-[46px] w-[860px] whitespace-nowrap text-[32.600px] font-normal leading-none"><span className="text-[31px]">014-</span>尚硅谷<span className="text-[31px]">-Netty</span><span className="ml-[4px]">核心技术及源码剖析</span><span className="text-[31px]">-Channel</span><span className="ml-[4px]">应用实例</span><span className="ml-[6px] text-[31px]">2</span></h1>
        <div className="relative ml-[574px]">
          <Ic w={40} h={40}>
            <path d="M10 15H6a5 5 0 00-5 5v14a5 5 0 005 5h25c3 0 4.500-2 5-4l3-16c.5-3-1-4.500-3-4.500H25c2-6 1-13-4-13.500-2.500 0-3 1.500-3 4-1 5-3.500 9-8 10zM11.500 15v24" stroke="#fff" strokeWidth="2" />
          </Ic>
          <span className="absolute left-[30px] top-[-17px] text-[20px] leading-[22px] tracking-[0.700px]">1149</span>
        </div>
        <Ic w={40} h={40} className="-mt-[3px] ml-[67px]">
          <path d="M10 25H6a5 5 0 01-5-5V6a5 5 0 015-5h25c3 0 4.500 2 5 4l3 16c.5 3-1 4.500-3 4.500H25c2 6 1 13-4 13.500-2.500 0-3-1.500-3-4-1-5-3.500-9-8-10zM11.500 25V1" stroke="#fff" strokeWidth="2" />
        </Ic>
        <Ic w={40} h={40} className="ml-[69px]">
          <circle cx="20" cy="20" r="19" stroke="#fff" strokeWidth="2" />
          <path d="M13 10.500h14M20 11v21.500M10.500 26.500c0-14 19-14 19 0" stroke="#fff" strokeWidth="2" />
        </Ic>
        <Ic w={42} h={35} className="-mt-[2px] ml-[67px]">
          <path d="M1.500 34C2 18 10 10 24 9.500V1.500L41 17 24 33V24C14 24 7 26 1.500 34z" stroke="#fff" strokeWidth="2" strokeLinejoin="round" />
        </Ic>
        <Ic w={8} h={32} className="ml-[83px]"><circle cx="4" cy="4" r="3.600" fill="#fff" /><circle cx="4" cy="16" r="3.600" fill="#fff" /><circle cx="4" cy="28" r="3.600" fill="#fff" /></Ic>
      </div>
    </div>
  );
}

function PlayerFooter() {
  return (
    <div className="flex h-[154px] flex-col font-['Inter','Noto_Sans_CJK_SC',sans-serif] text-white">
      <div className="mt-[33px] flex h-[20px] items-center">
        <div className="h-[4px] w-[258px] bg-[#f2708f]" />
        <div className="ml-[3px] mr-[3px] mt-px flex h-[20px] w-[26px] shrink-0 items-center justify-center gap-[7px] rounded-[4px] bg-white outline outline-1 outline-offset-4 outline-[#35141f]">
          <i className="h-[8px] w-[3.500px] rounded-full bg-black" /><i className="h-[8px] w-[3.500px] rounded-full bg-black" />
        </div>
        <div className="h-[4px] w-[10px] bg-[#858585]" />
        <div className="h-[4px] flex-1 bg-[#333]" />
      </div>
      <div className="flex h-[102px] items-center pt-[5px]">
        <Ic w={39} h={46} className="ml-[38px]"><path d="M0 4c0-4 3-5 6-3l30 18c3 2 3 5 0 7L6 44c-3 2-6 1-6-3z" fill="#fff" /></Ic>
        <Ic w={24} h={26} className="ml-[55px]"><path d="M0 3c0-3 2-4 4-2l13 9V3c0-3 6-3 6 0v20c0 3-6 3-6 0v-7L4 25c-2 2-4 1-4-2z" fill="#fff" /></Ic>
        <span className="ml-[85px] w-[137px] whitespace-nowrap font-['Liberation_Sans'] text-[23.800px] font-bold leading-none">01:26/11:24</span>
        <Ic w={42} h={42} className="ml-[70px]">
          <path d="M22 38H8a6 6 0 01-6-6V14a6 6 0 016-6h25a6 6 0 016 6v8M11 1l4 6M28 1l-4 6" stroke="#fff" strokeWidth="3" strokeLinecap="round" />
          <text x="10" y="30" fontFamily="Noto Sans CJK SC" fontWeight="bold" fontSize="20" fill="#fff">弹</text>
          <circle cx="33.500" cy="33" r="10.500" fill="#000" />
          <circle cx="33.500" cy="33" r="7.500" stroke="#fff" strokeWidth="2.800" />
          <path d="M28.500 28l10 10" stroke="#fff" strokeWidth="2.800" />
        </Ic>
        <div className="ml-auto flex items-center whitespace-nowrap text-[27px] leading-none">
          <span className="w-[125px] text-[27.300px]">选集</span>
          <span className="w-[122px] tracking-[-0.200px]">1.5X</span>
          <span className="w-[153px]">1080P</span>
          <Ic w={38} h={30} className="mr-[36px]">
            <path d="M16 23H3a2 2 0 01-2-2V3a2 2 0 012-2h28a2 2 0 012 2v12M7 7l9 9M16 9v7H8" stroke="#fff" strokeWidth="2" />
            <rect x="18" y="18" width="20" height="12" rx="2" fill="#fff" />
          </Ic>
        </div>
      </div>
    </div>
  );
}

export default function App() {
  return (
    <div className="relative flex h-[1536px] w-[2048px] flex-col overflow-hidden bg-black">
      <PlayerHeader />
      <div className="flex h-[1228px] flex-col overflow-hidden bg-[#e2e5e8] font-['Open_Sans','Noto_Sans_CJK_SC',sans-serif]">
        <div className="bg-gradient-to-b from-[#e6eaec] to-[#dfe2e5]">
          <TitleBar />
          <TabRow />
        </div>
        <Ribbon />
        <FormulaBar />
        <Sheet />
        <SheetTabs />
        <StatusBar />
        <Taskbar />
      </div>
      <PlayerFooter />
      <div className="absolute left-[1944px] top-[661px] flex h-[88px] w-[88px] items-center justify-center rounded-[16px] bg-black/30">
        <Ic w={40} h={32}>
          <path d="M11 6l3-5h12l3 5h7a3 3 0 013 3v19a3 3 0 01-3 3H4a3 3 0 01-3-3V9a3 3 0 013-3z" stroke="#fff" strokeWidth="1.800" strokeLinejoin="round" />
          <circle cx="20" cy="17.500" r="6.500" stroke="#fff" strokeWidth="1.800" />
        </Ic>
      </div>
      <div className="absolute left-[1944px] top-[789px] flex h-[88px] w-[88px] items-center justify-center rounded-[16px] bg-black/30">
        <Ic w={36} h={40} className="-mt-[3px] ml-[5px]">
          <rect x="1" y="17" width="30" height="22" rx="5" stroke="#fff" strokeWidth="1.800" />
          <path d="M20 17V9c0-10 17-10 17 0v7" stroke="#fff" strokeWidth="1.800" />
          <path d="M16 24v8" stroke="#fff" strokeWidth="2" strokeLinecap="round" /><circle cx="16" cy="26" r="2.800" fill="#fff" />
        </Ic>
      </div>
    </div>
  );
}
